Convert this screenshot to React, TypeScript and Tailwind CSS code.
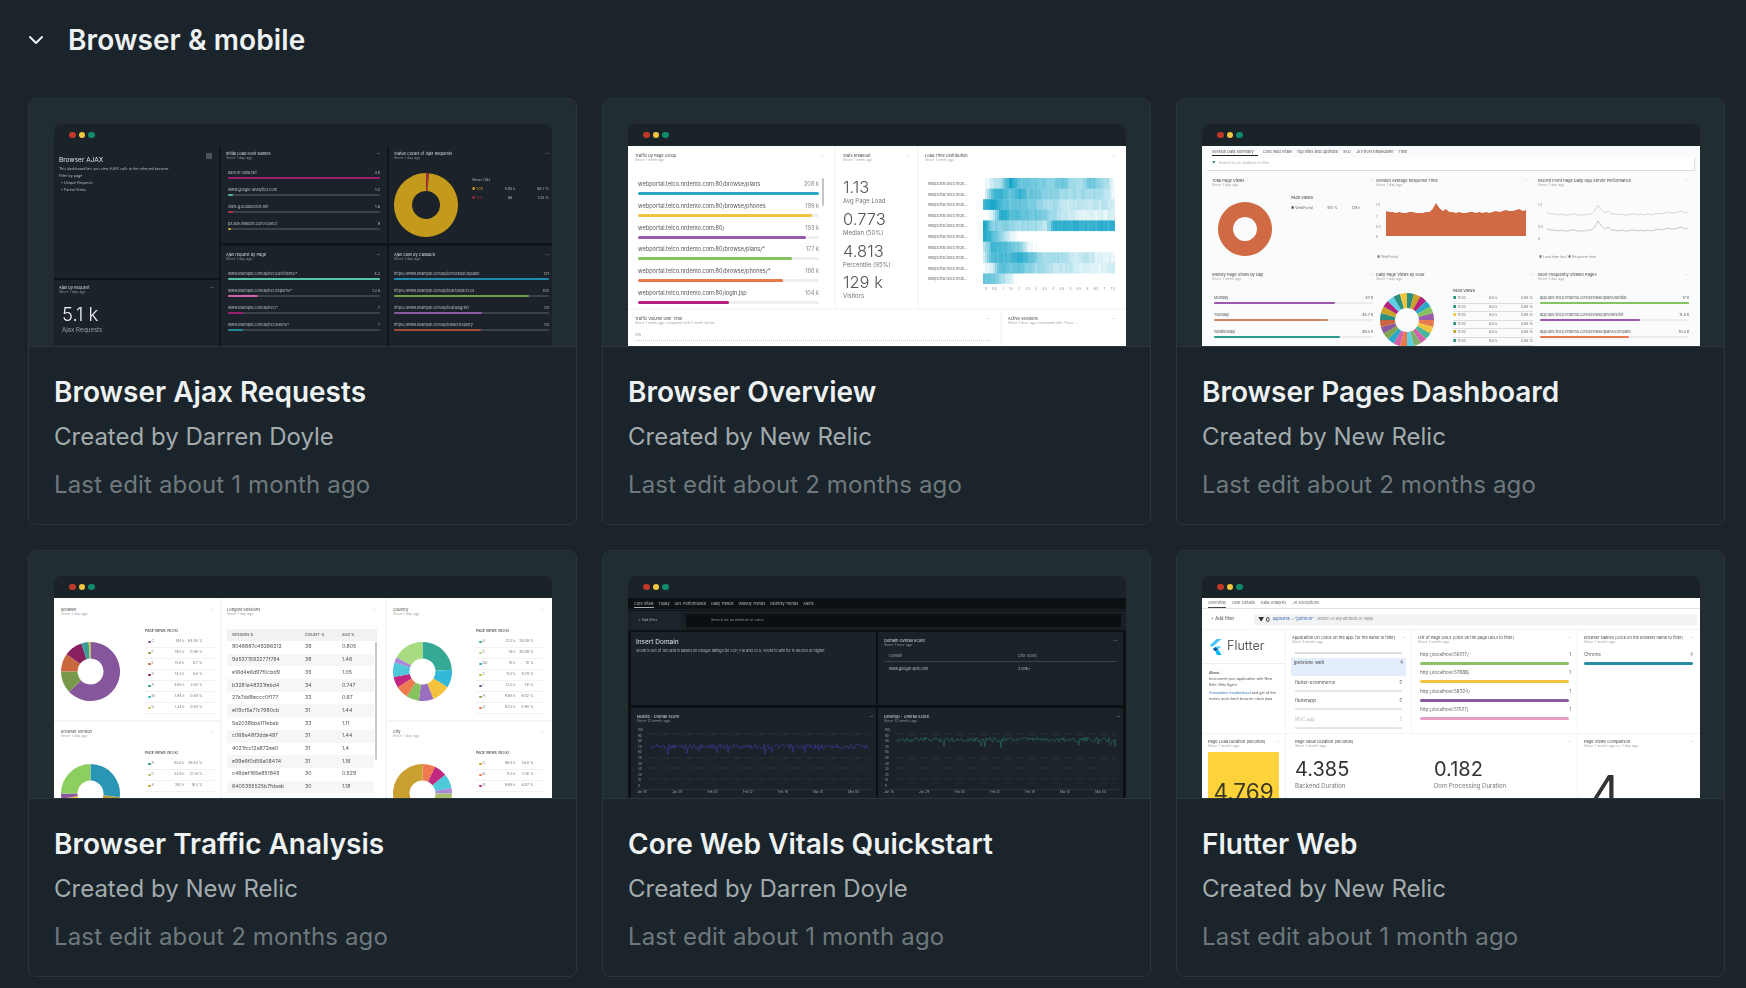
import React from 'react';
import { ChevronDown } from 'lucide-react';

type Seg = [number, string];

// donut drawn from arcs, clockwise from 12 o'clock
const Donut = ({ size, hole, segs }: { size: number; hole: number; segs: Seg[] }) => {
  const c = size / 2;
  const total = segs.reduce((s, x) => s + x[0], 0);
  let a = -Math.PI / 2;
  return (
    <svg width={size} height={size} viewBox={`0 0 ${size} ${size}`} className="shrink-0">
      {segs.map(([v, color], i) => {
        const next = a + (v / total) * Math.PI * 2 - 0.0001;
        const large = next - a > Math.PI ? 1 : 0;
        const d = `M${c + c * Math.cos(a)} ${c + c * Math.sin(a)}A${c} ${c} 0 ${large} 1 ${c + c * Math.cos(next)} ${c + c * Math.sin(next)}L${c + hole * Math.cos(next)} ${c + hole * Math.sin(next)}A${hole} ${hole} 0 ${large} 0 ${c + hole * Math.cos(a)} ${c + hole * Math.sin(a)}Z`;
        a = next;
        return <path key={i} d={d} fill={color} />;
      })}
    </svg>
  );
};

const noise = (i: number, seed: number) => {
  const v = Math.sin(i * 12.9898 + seed * 78.233) * 43758.5453;
  return v - Math.floor(v);
};

const Head = ({ title, sub, dark }: { title: string; sub: string; dark?: boolean }) => (
  <div className="flex justify-between">
    <div>
      <div className={`text-[4px] leading-[5px] whitespace-nowrap ${dark ? 'text-[#d8dcde]' : 'text-[#444]'}`}>{title}</div>
      <div className={`text-[3.6px] leading-[5px] whitespace-nowrap ${dark ? 'text-[#8b9296]' : 'text-[#a5a5a5]'}`}>{sub}</div>
    </div>
    <div className={`text-[4px] leading-[5px] ${dark ? 'text-[#d8dcde]' : 'text-[#999]'}`}>···</div>
  </div>
);

const BarRow = ({ label, value, frac, color, dark }: { label: string; value: string; frac: number; color: string; dark?: boolean }) => (
  <div className="h-[17px] pt-[3px]">
    <div className={`flex justify-between text-[3.8px] leading-[6px] whitespace-nowrap ${dark ? 'text-[#b7bcbf]' : 'text-[#555]'}`}>
      <span>{label}</span>
      <span>{value}</span>
    </div>
    <div className={`h-[2px] mt-[1px] rounded-full ${dark ? 'bg-[#3b4348]' : 'bg-[#ececec]'}`}>
      <div className="h-full rounded-full" style={{ width: `${frac * 100}%`, background: color }} />
    </div>
  </div>
);

const Legend = ({ title, rows }: { title: string; rows: [string, string, string, string][] }) => (
  <div className="w-[69px] shrink-0">
    <div className="text-[3.4px] leading-[5px] font-semibold text-[#555] mb-[3px]">{title}</div>
    {rows.map(([color, name, a, b], i) => (
      <div key={i} className="flex items-center h-[11px] text-[3.6px] text-[#777] border-b border-[#f2f2f2]">
        <div className="size-[2.5px] rounded-full ml-[3px] mr-[1px]" style={{ background: color }} />
        <span className="w-[16px]">{name}</span>
        <span className="w-[17px] text-right">{a}</span>
        <span className="w-[18px] text-right">{b}</span>
      </div>
    ))}
  </div>
);

const BrowserAjax = () => (
  <div className="flex gap-[2px] h-full bg-[#0e1418] blur-[0.35px]">
    <div className="w-[165px] flex flex-col gap-[2px]">
      <div className="h-[132px] bg-[#1b2229] px-[5px] pt-[10px] text-[#b7bcbf]">
        <div className="flex justify-between">
          <div className="text-[6.5px] leading-[9px] text-[#dfe3e5]">Browser AJAX</div>
          <div className="size-[6px] bg-[#4a5258] mr-[2px] -mt-[3px]" />
        </div>
        <div className="text-[3.6px] leading-[7px] whitespace-nowrap mt-[1px]">This dashboard lets you view AJAX calls to the selected browser</div>
        <div className="text-[3.6px] leading-[7px]">Filter by page</div>
        <div className="text-[3.6px] leading-[7px] pl-[2px]">• Unique Requests</div>
        <div className="text-[3.6px] leading-[7px] pl-[2px]">• Parent Views</div>
      </div>
      <div className="flex-1 bg-[#1b2229] px-[5px] pt-[5px] text-[#d8dcde]">
        <Head title="Ajax by Request" sub="Since 1 day ago" dark />
        <div className="text-[18.5px] leading-[22px] font-light mt-[8px] pl-[3px] text-[#eef1f2]">5.1 k</div>
        <div className="text-[6px] leading-[7px] pl-[3px] mt-[1px] text-[#9aa0a4]">Ajax Requests</div>
      </div>
    </div>
    <div className="w-[166px] flex flex-col gap-[3px]">
      <div className="h-[97px] bg-[#1b2229] pl-[5px] pr-[7px] pt-[5px]">
        <Head title="Initial Load Host Names" sub="Since 1 day ago" dark />
        <div className="pl-[2px] mt-[6px]">
          <BarRow dark label="bam.nr-data.net" value="4 k" frac={1} color="#9c1f6e" />
          <BarRow dark label="www.google-analytics.com" value="1.2" frac={0.03} color="#45b89a" />
          <BarRow dark label="stats.g.doubleclick.net" value="1.6" frac={0.03} color="#a8324a" />
          <BarRow dark label="px.ads.linkedin.com/collect" value="9" frac={0.02} color="#c9a227" />
        </div>
      </div>
      <div className="flex-1 bg-[#1b2229] pl-[5px] pr-[7px] pt-[6px]">
        <Head title="Ajax request by Page" sub="Since 1 day ago" dark />
        <div className="pl-[2px] mt-[6px]">
          <BarRow dark label="www.example.com/api/v2/cart/items/*" value="4.2" frac={1} color="#55c7a7" />
          <BarRow dark label="www.example.com/api/v2/reports/*" value="1.3 k" frac={0.2} color="#d163ab" />
          <BarRow dark label="www.example.com/api/v2/*" value="7" frac={0.1} color="#9c1f6e" />
          <BarRow dark label="www.example.com/api/v2/users/*" value="7" frac={0.1} color="#1e8a94" />
        </div>
      </div>
    </div>
    <div className="flex-1 flex flex-col gap-[3px]">
      <div className="h-[97px] bg-[#1b2229] pl-[5px] pr-[3px] pt-[5px]">
        <Head title="Status Codes of Ajax Requests" sub="Since 1 day ago" dark />
        <div className="flex gap-[14px] pt-[12px]">
          <Donut size={64} hole={14} segs={[[1.5, '#a52a3a'], [98.5, '#c49a1c']]} />
          <div className="flex-1 text-[3.6px] leading-[9px] text-[#b7bcbf] pt-[3px]">
            <div>Views (4k)</div>
            <div className="flex justify-between"><span className="text-[#c49a1c]">● 200</span><span>5.05 k</span><span>98.7 %</span></div>
            <div className="flex justify-between"><span className="text-[#a52a3a]">● 301</span><span>66</span><span>1.28 %</span></div>
          </div>
        </div>
      </div>
      <div className="flex-1 bg-[#1b2229] pl-[5px] pr-[3px] pt-[6px]">
        <Head title="Ajax calls by Callback" sub="Since 1 day ago" dark />
        <div className="mt-[6px]">
          <BarRow dark label="https://www.example.com/api/checkout/update" value="121" frac={1} color="#1e88ad" />
          <BarRow dark label="https://www.example.com/api/cart/add/1234" value="102" frac={0.87} color="#6f9e44" />
          <BarRow dark label="https://www.example.com/api/catalog/list" value="7.0" frac={0.57} color="#8a5aa0" />
          <BarRow dark label="https://www.example.com/api/search/query" value="7.0" frac={0.56} color="#a04f3a" />
        </div>
      </div>
    </div>
  </div>
);

const heatRows = [
  '0238555445335430',
  '0675755443333320',
  '7865554332222221',
  '0186655432211111',
  '8444333277777777',
  '8631000000000000',
  '2765410000000000',
  '2666764333222111',
  '0265543322211112',
  '5531000000000000',
];

// smooths the 16 coarse cells into thin columns
const Heatmap = () => (
  <svg width="132" height="106" viewBox="0 0 132 106">
    {heatRows.map((row, y) =>
      Array.from({ length: 66 }, (_, x) => {
        const p = (x / 66) * 15;
        const i = Math.floor(p);
        const v = Number(row[i]) + (Number(row[i + 1]) - Number(row[i])) * (p - i);
        const alpha = v === 0 ? 0 : Math.max(0, v / 8 + (noise(x, y) - 0.5) * 0.12);
        return <rect key={`${x}-${y}`} x={x * 2} y={y * 10.6} width="2.1" height="10.7" fill="#17a5c8" fillOpacity={alpha} />;
      })
    )}
  </svg>
);

const BrowserOverview = () => (
  <div className="h-full bg-[#f7f8f8] flex flex-col gap-[2px] blur-[0.35px]">
    <div className="h-[162px] flex gap-[2px]">
      <div className="w-[206px] bg-white pl-[7px] pr-[10px] pt-[7px]">
        <Head title="Traffic by Page Group" sub="Since 1 week ago" />
        <div className="flex mt-[17px] pl-[3px] gap-[3px]">
          <div className="w-[181px] flex flex-col gap-[4.8px]">
            {[
              ['webportal.telco.nrdemo.com:80/browse/plans', '208 k', 1, '#2ba8c6'],
              ['webportal.telco.nrdemo.com:80/browse/phones', '199 k', 0.96, '#f0c43f'],
              ['webportal.telco.nrdemo.com:80/', '193 k', 0.93, '#9b59ab'],
              ['webportal.telco.nrdemo.com:80/browse/plans/*', '177 k', 0.85, '#86c35f'],
              ['webportal.telco.nrdemo.com:80/browse/phones/*', '166 k', 0.8, '#e8794d'],
              ['webportal.telco.nrdemo.com:80/login.jsp', '104 k', 0.5, '#b5217f'],
            ].map(([label, value, frac, color]) => (
              <div key={label as string} className="h-[17px]">
                <div className="flex justify-between text-[5.6px] leading-[9px] text-[#555] whitespace-nowrap">
                  <span>{label}</span>
                  <span className="text-[#888]">{value}</span>
                </div>
                <div className="h-[3px] mt-[3px] rounded-full bg-[#eeeeee]">
                  <div className="h-full rounded-full" style={{ width: `${(frac as number) * 100}%`, background: color as string }} />
                </div>
              </div>
            ))}
          </div>
          <div className="w-[2px] h-[28px] bg-[#c4c4c4] rounded-full -mt-[2px]" />
        </div>
      </div>
      <div className="w-[81px] bg-white pl-[7px] pr-[8px] pt-[7px]">
        <Head title="Stats Breakout" sub="Since 1 week ago" />
        <div className="mt-[14px]">
          {[
            ['1.13', 'Avg Page Load'],
            ['0.773', 'Median (50%)'],
            ['4.813', 'Percentile (95%)'],
            ['129 k', 'Visitors'],
          ].map(([n, l]) => (
            <div key={l} className="h-[31.8px]">
              <div className="text-[16.5px] leading-[20px] text-[#555] font-light">{n}</div>
              <div className="text-[6px] leading-[8px] text-[#777] whitespace-nowrap">{l}</div>
            </div>
          ))}
        </div>
      </div>
      <div className="flex-1 bg-white pl-[6px] pr-[11px] pt-[7px]">
        <Head title="Load Time Distribution" sub="Since 1 week ago" />
        <div className="flex mt-[15px] justify-between">
          <div className="pl-[3px] pt-[1px]">
            {heatRows.map((_, i) => (
              <div key={i} className="h-[10.6px] text-[3.7px] leading-[10px] text-[#666]">webportal.telco.nrde...</div>
            ))}
          </div>
          <Heatmap />
        </div>
        <div className="flex justify-between pl-[60px] text-[3.2px] leading-[8px] text-[#888] whitespace-nowrap">
          {['0', '0.5', '1', '1.5', '2', '2.5', '3', '3.5', '4', '4.5', '5', '5.5', '6', '6.5', '7', '7.5'].map((t) => (
            <span key={t}>{t}</span>
          ))}
        </div>
      </div>
    </div>
    <div className="flex-1 flex gap-[2px]">
      <div className="w-[372px] bg-white pl-[7px] pr-[10px] pt-[6px]">
        <Head title="Traffic Volume over Time" sub="Since 1 week ago compared with 1 week earlier" />
        <div className="text-[3.6px] leading-[5px] text-[#888] mt-[7px]">125</div>
        <div className="border-t border-dotted border-[#ccc] mt-[2px]" />
      </div>
      <div className="flex-1 bg-white pl-[6px] pr-[10px] pt-[6px]">
        <Head title="Active Sessions" sub="Since 1 hour ago compared with 1 hour ..." />
      </div>
    </div>
  </div>
);

const areaTop = [8, 9, 9, 10, 9, 10, 10, 9, 9, 10, 10, 10, 9, 9, 6, 0, 5, 8, 6, 9, 9, 10, 9, 10, 10, 9, 9, 10, 9, 10, 9, 10, 9, 8, 9, 8, 7, 8, 8, 7, 6, 8, 7];

const AreaChart = () => (
  <svg width="150" height="44" viewBox="0 0 150 44" className="mt-[12px]">
    <path d={`M10 36${areaTop.map((y, i) => `L${10 + (i * 140) / 42} ${y + 3}`).join('')}L150 36Z`} fill="#cf6a45" />
    <text x="0" y="6" fontSize="3.4" fill="#888">1.5</text>
    <text x="0" y="18" fontSize="3.4" fill="#888">1</text>
    <text x="0" y="28" fontSize="3.4" fill="#888">0.5</text>
    <text x="0" y="38" fontSize="3.4" fill="#888">0</text>
  </svg>
);

const LineChart = () => (
  <svg width="150" height="44" viewBox="0 0 150 44" className="mt-[12px]">
    <path d={`M10 14${areaTop.map((y, i) => `L${10 + (i * 140) / 42} ${y + 5}`).join('')}`} fill="none" stroke="#999" strokeWidth="0.4" />
    <path d={`M10 30${areaTop.map((y, i) => `L${10 + (i * 140) / 42} ${y + 21}`).join('')}`} fill="none" stroke="#777" strokeWidth="0.4" />
    <text x="0" y="6" fontSize="3.4" fill="#888">1.5</text>
    <text x="0" y="28" fontSize="3.4" fill="#888">0.5</text>
    <text x="0" y="40" fontSize="3.4" fill="#888">0</text>
  </svg>
);

const BrowserPages = () => (
  <div className="h-full bg-[#fafbfc] blur-[0.35px] overflow-hidden">
    <div className="h-[12px] flex gap-[5px] pl-[10px] text-[3.8px] leading-[11px] text-[#555] whitespace-nowrap">
      <span className="border-b border-[#222] w-[46px] h-[10px]">Session Data Summary</span>
      <span>Core Web Vitals</span>
      <span>Top Sites and Optimize</span>
      <span>SEO</span>
      <span>JS Errors Breakdown</span>
      <span>Time</span>
    </div>
    <div className="h-[13px] mx-[5px] bg-white border-r border-b border-[#dcdcdc] pl-[5px] text-[3.6px] leading-[10px] text-[#aaa] flex gap-[3px]">
      <span className="text-[#2f8f83]">▼</span>
      <span>Search for an attribute to filter</span>
    </div>
    <div className="grid grid-cols-[164px_162px_1fr] pl-[10px] pt-[7px] pr-[11px] h-[97px]">
      <div className="pr-[3px]">
        <Head title="Total Page Views" sub="Since 1 day ago" />
        <div className="flex gap-[19px] pl-[6px]">
          <div className="pt-[14px]">
            <Donut size={54} hole={12} segs={[[1, '#cf6a45']]} />
          </div>
          <div className="pt-[5px] text-[3.6px] leading-[10px] text-[#666] whitespace-nowrap">
            <div className="font-semibold">PAGE VIEWS</div>
            <div className="flex gap-[14px]"><span>● WebPortal</span><span>100 %</span><span>129 k</span></div>
          </div>
        </div>
      </div>
      <div className="pr-[11px]">
        <Head title="Session Average Response Time" sub="Since 1 day ago" />
        <AreaChart />
        <div className="text-[3.4px] leading-[8px] text-[#888] pl-[1px] mt-[9px]">● WebPortal</div>
      </div>
      <div>
        <Head title="Recent Front Page Daily App Server Performance" sub="Since 1 day ago" />
        <LineChart />
        <div className="text-[3.4px] leading-[8px] text-[#888] pl-[1px] mt-[9px]">● Load time (ms) ● Response time</div>
      </div>
    </div>
    <div className="grid grid-cols-[164px_162px_1fr] pl-[10px] pr-[11px] mt-[4px]">
      <div className="pr-[3px]">
        <Head title="Weekly Page Views by Day" sub="Since 1 week ago" />
        <div className="mt-[10px] pl-[2px]">
          <BarRow label="Monday" value="47 k" frac={0.76} color="#9b59ab" />
          <BarRow label="Tuesday" value="44.7 k" frac={0.72} color="#c98a5f" />
          <BarRow label="Wednesday" value="49.5 k" frac={0.79} color="#2a9d8f" />
          <BarRow label="Thursday" value="42 k" frac={0.7} color="#cf6a45" />
        </div>
      </div>
      <div className="pr-[5px]">
        <Head title="Daily Page Views by Hour" sub="Since 1 day ago" />
        <div className="flex gap-[19px] pl-[4px]">
          <div className="pt-[11px]">
            <Donut size={54} hole={12} segs={[[4, '#2a8f7f'], [4, '#c9a227'], [4, '#b5217f'], [4, '#2ba8c6'], [4, '#86c35f'], [4, '#9b59ab'], [4, '#e8794d'], [4, '#f0c43f'], [4, '#45b89a'], [4, '#d163ab'], [4, '#7fb069'], [4, '#5ccfe6'], [4, '#e8794d'], [4, '#d163ab'], [4, '#2ba8c6'], [4, '#7fa650'], [4, '#8a5aa0'], [4, '#c9663f'], [4, '#2a8f7f'], [4, '#c9a227'], [4, '#b5217f'], [4, '#5ccfe6'], [4, '#2a8f7f'], [4, '#f0c43f']]} />
          </div>
          <div className="pt-[6px] text-[3.6px] text-[#666] flex-1">
            <div className="font-semibold leading-[7px]">PAGE VIEWS</div>
            {['#2a8f7f', '#2a8f7f', '#f0c43f', '#2a8f7f', '#c9a227', '#2a8f7f'].map((c, i) => (
              <div key={i} className="flex justify-between h-[8.5px] items-center border-b border-[#ddd]">
                <span style={{ color: c }}>■ <span className="text-[#777]">11:00</span></span>
                <span>6.5 k</span>
                <span>5.06 %</span>
              </div>
            ))}
          </div>
        </div>
      </div>
      <div>
        <Head title="Most Frequently Viewed Pages" sub="Since 1 day ago" />
        <div className="mt-[10px] pl-[2px]">
          <BarRow label="app.dev.telco.nrdemo.com/browse/plans/details" value="17 k" frac={1} color="#86c35f" />
          <BarRow label="app.dev.telco.nrdemo.com/browse/phones/list" value="11.4 k" frac={0.67} color="#9b59ab" />
          <BarRow label="app.dev.telco.nrdemo.com/browse/plans/compare" value="10.3 k" frac={0.6} color="#e8794d" />
          <BarRow label="app.dev.telco.nrdemo.com/checkout/shipping" value="9.8 k" frac={0.5} color="#2ba8c6" />
        </div>
      </div>
    </div>
  </div>
);

const sessions: [string, string, string][] = [
  ['9048887c49266212', '39', '0.805'],
  ['9d5371592277f784', '38', '1.46'],
  ['e16d4e6d97f0cbd9', '35', '1.05'],
  ['b3281a48321febd4', '34', '0.747'],
  ['27a7dd8eccc0f177', '33', '0.67'],
  ['e09cf5a71c7680cb', '31', '1.44'],
  ['5a2038bba111ebab', '33', '1.11'],
  ['c068a48f3dde497', '31', '1.44'],
  ['4021fcc12a872ee0', '31', '1.4'],
  ['e99e6f0d56a08474', '31', '1.16'],
  ['c46def165e851845', '30', '0.529'],
  ['6405355525b7fdaab', '30', '1.18'],
];

const legendA: [string, string, string, string][] = [
  ['#7a4f9a', 'C', '104 k', '64.93 %'],
  ['#7f9a3f', 'F', '19.5 k', '11.96 %'],
  ['#c9663f', 'E', '15.8 k', '9.7 %'],
  ['#8a1f5e', 'S', '14.3 k', '8.8 %'],
  ['#2a8f7f', 'A', '4.65 k', '2.85 %'],
  ['#35b5b0', 'M', '1.94 k', '0.84 %'],
  ['#c9c03f', 'U', '1.34 k', '0.84 %'],
];

const legendB: [string, string, string, string][] = [
  ['#35a896', 'U', '21.3 k', '26.09 %'],
  ['#a8dc80', 'C', '19 k', '20.99 %'],
  ['#2ba8c6', 'BU', '16 k', '10 %'],
  ['#c9c03f', 'C', '15.7 k', '9.79 %'],
  ['#7a4f9a', 'L', '13.3 k', '7.6 %'],
  ['#7fa650', 'A', '9.68 k', '6.02 %'],
  ['#e8794d', 'G', '9.53 k', '5.94 %'],
];

const BrowserTraffic = () => (
  <div className="h-full bg-[#f5f6f6] grid grid-cols-[166px_163px_1fr] gap-[2px] blur-[0.35px]">
    <div className="flex flex-col gap-[2px]">
      <div className="h-[122px] bg-white pl-[7px] pr-[6px] pt-[9px]">
        <Head title="Browser" sub="Since 1 day ago" />
        <div className="flex justify-between pt-[12px]">
          <div className="pt-[13px]">
            <Donut size={59} hole={13} segs={[[63, '#85569b'], [12, '#79994a'], [10, '#c9683f'], [10, '#8a1f5e'], [4, '#3d9c96'], [1, '#c9c03f']]} />
          </div>
          <Legend title="PAGE VIEWS (163 K)" rows={legendA} />
        </div>
      </div>
      <div className="flex-1 bg-white pl-[7px] pr-[6px] pt-[7px] overflow-hidden">
        <Head title="Browser Version" sub="Since 1 day ago" />
        <div className="flex justify-between pt-[12px]">
          <div className="pt-[13px]">
            <Donut size={59} hole={13} segs={[[27, '#2996b5'], [21, '#b59a3a'], [16, '#c9a227'], [5, '#2ba8c6'], [3, '#f0c43f'], [3, '#8a5aa0'], [25, '#8ccf60']]} />
          </div>
          <Legend title="PAGE VIEWS (163 K)" rows={[['#2a8f7f', 'A', '42.6 k', '26.44 %'], ['#b5c06a', 'C', '33.9 k', '21.14 %'], ['#c9a227', 'S', '26.1 k', '16.3 %']]} />
        </div>
      </div>
    </div>
    <div className="bg-white pl-[5px] pr-[8px] pt-[9px] overflow-hidden">
      <Head title="Longest Sessions" sub="Since 1 day ago" />
      <div className="h-[12px] mt-[12px] bg-[#f2f2f2] flex items-center pl-[5px] text-[4px] font-medium text-[#666]">
        <span className="w-[73px]">SESSION ⇅</span>
        <span className="w-[37px]">COUNT ⇅</span>
        <span>AVG ⇅</span>
      </div>
      <div className="flex">
        <div className="w-[149px]">
          {sessions.map(([s, c, a], i) => (
            <div key={s} className={`h-[12.7px] flex items-center pl-[5px] text-[5.2px] text-[#555] ${i % 2 ? 'bg-[#f6f6f6]' : 'bg-white'}`}>
              <span className="w-[73px] whitespace-nowrap">{s}</span>
              <span className="w-[37px]">{c}</span>
              <span>{a}</span>
            </div>
          ))}
        </div>
        <div className="w-[2px] h-[118px] ml-[1px] mt-[1px] bg-[#c8c8c8] rounded-full" />
      </div>
    </div>
    <div className="flex flex-col gap-[2px]">
      <div className="h-[122px] bg-white pl-[6px] pr-[7px] pt-[9px]">
        <Head title="Country" sub="Since 1 day ago" />
        <div className="flex justify-between pt-[12px]">
          <div className="pt-[13px]">
            <Donut size={59} hole={13} segs={[[24, '#35a896'], [10, '#34b8d8'], [10, '#f5c33b'], [8, '#9b6fc0'], [7, '#86c35f'], [7, '#f07a4f'], [6, '#c2287f'], [8, '#4fc9d9'], [3, '#a988d8'], [17, '#a8dc80']]} />
          </div>
          <Legend title="PAGE VIEWS (163 K)" rows={legendB} />
        </div>
      </div>
      <div className="flex-1 bg-white pl-[6px] pr-[7px] pt-[7px] overflow-hidden">
        <Head title="City" sub="Since 1 day ago" />
        <div className="flex justify-between pt-[12px]">
          <div className="pt-[13px]">
            <Donut size={59} hole={13} segs={[[7, '#f07a4f'], [7, '#c2287f'], [8, '#4fc9d9'], [3, '#a988d8'], [5, '#a8c070'], [70, '#c9a02f']]} />
          </div>
          <Legend title="PAGE VIEWS (163 K)" rows={[['#c9a02f', 'C', '96.5 k', '58.8 %'], ['#f07a4f', 'N', '11.3 k', '7.48 %'], ['#c2287f', 'N', '9.68 k', '6.07 %']]} />
        </div>
      </div>
    </div>
  </div>
);

const ScoreChart = ({ color, base, seed }: { color: string; base: number; seed: number }) => {
  const pts = Array.from({ length: 220 }, (_, i) => {
    const dip = noise(i, seed) > 0.96 ? 6 : 0;
    return `${13 + (i * 219) / 219},${(base + noise(i + 3, seed) * 5 + dip).toFixed(1)}`;
  }).join(' ');
  return (
    <svg width="236" height="64" viewBox="0 0 236 64" className="mt-[2px]">
      {[8, 32, 42, 53].map((y) => (
        <line key={y} x1="12" x2="232" y1={y} y2={y} stroke="#4a5258" strokeWidth="0.4" strokeDasharray="8 4" />
      ))}
      <polyline points={pts} fill="none" stroke={color} strokeWidth="0.55" />
      {['100', '90', '80', '70', '60', '50', '40', '30', '20', '10', '0'].map((t, i) => (
        <text key={t} x="1" y={5 + i * 5.6} fontSize="3" fill="#9aa0a4">{t}</text>
      ))}
      <line x1="0" x2="236" y1="63.5" y2="63.5" stroke="#3b4348" strokeWidth="0.5" />
    </svg>
  );
};

const Ticks = () => (
  <div className="flex justify-between text-[3.2px] leading-[5px] text-[#9aa0a4] whitespace-nowrap pr-[14px]">
    {['Jan 15', 'Jan 29', 'Feb 05', 'Feb 12', 'Feb 19', 'Mar 01', 'Mar 08'].map((t) => <span key={t}>{t}</span>)}
  </div>
);

const CoreWebVitals = () => (
  <div className="h-full bg-[#0c1114] blur-[0.35px] overflow-hidden">
    <div className="h-[12px] flex gap-[5px] pl-[6px] text-[3.8px] leading-[11px] text-[#b7bcbf] whitespace-nowrap border-b border-[#20272c]">
      <span className="border-b border-[#aab] h-[10px]">Core Vitals</span>
      <span>Today</span>
      <span>URL Performance</span>
      <span>Daily Trends</span>
      <span>Weekly Trends</span>
      <span>Monthly Trends</span>
      <span>Alerts</span>
    </div>
    <div className="h-[19px] flex gap-[2px] mt-[1px] pl-[3px] pr-[2px] bg-[#182026]">
      <div className="w-[50px] flex items-center pl-[7px] text-[3.6px] text-[#a5abaf] bg-[#1c242a] whitespace-nowrap">+ Add filter</div>
      <div className="flex-1 flex items-center pl-[25px] m-[3px] text-[3.6px] text-[#8b9296] bg-[#0b0f12] rounded-[1px] whitespace-nowrap">Search for an attribute or value</div>
    </div>
    <div className="grid grid-cols-2 gap-x-[2px] gap-y-[3px] px-[3px] pt-[2px]">
      <div className="h-[73px] bg-[#1b2229] px-[5px] pt-[6px]">
        <div className="text-[6.5px] leading-[9px] text-[#dfe3e5]">Insert Domain</div>
        <div className="text-[3.7px] leading-[8px] text-[#b7bcbf] whitespace-nowrap">Score is out of 100 and is based on Google ratings for LCP, FID and CLS. Score to aim for is 90/100 or higher.</div>
      </div>
      <div className="h-[73px] bg-[#1b2229] px-[6px] pt-[6px]">
        <Head title="Domain Overall Score" sub="Since 1 hour ago" dark />
        <div className="flex text-[3.7px] leading-[10px] text-[#9aa0a4] border-b border-[#3b4348] pl-[5px] mt-[3px]">
          <span className="w-[129px]">Domain</span><span>Grid Score</span>
        </div>
        <div className="flex text-[3.7px] leading-[13px] text-[#b7bcbf] pl-[5px]">
          <span className="w-[129px]">www.google-apis.com</span><span>2.00B+</span>
        </div>
      </div>
      <div className="h-[90px] bg-[#1b2229] pl-[6px] pr-[3px] pt-[6px]">
        <Head title="Mobile - Overall Score" sub="Since 12 weeks ago" dark />
        <ScoreChart color="#3e3fa8" base={18} seed={1} />
        <Ticks />
      </div>
      <div className="h-[90px] bg-[#1b2229] pl-[6px] pr-[3px] pt-[6px]">
        <Head title="Desktop - Overall Score" sub="Since 12 weeks ago" dark />
        <ScoreChart color="#2b7a63" base={11} seed={2} />
        <Ticks />
      </div>
    </div>
  </div>
);

const FlutterLogo = () => (
  <svg width="13" height="16" viewBox="0 0 13 16" className="shrink-0">
    <path d="M7.8 0H12.6L3.2 8 .8 6.2Z" fill="#47c5fb" />
    <path d="M7.8 7.4H12.6L6.4 12.2 3.8 10.1Z" fill="#47c5fb" />
    <path d="M3.8 10.1 6.4 7.9 9 10.2 6.4 12.2Z" fill="#00569e" />
    <path d="M6.4 12.2 9 10.2 12.6 16H7.8Z" fill="#00b5f8" />
  </svg>
);

const FlutterWeb = () => (
  <div className="h-full bg-[#f2f4f5] blur-[0.35px] overflow-hidden">
    <div className="h-[11px] bg-white flex gap-[6px] pl-[6px] text-[4px] leading-[10px] text-[#666] whitespace-nowrap border-b border-[#e2e2e2]">
      <span className="border-b border-[#444] h-[10px]">Overview</span>
      <span>User Details</span>
      <span>Data Analysis</span>
      <span>JS Exceptions</span>
    </div>
    <div className="h-[20px] bg-white flex items-center pl-[9px] pr-[3px]">
      <div className="w-[43px] text-[4.4px] text-[#444] whitespace-nowrap">+ Add filter</div>
      <div className="flex-1 h-[11px] bg-[#f1f3f4] flex items-center pl-[4px] gap-[3px] text-[3.8px] text-[#888] whitespace-nowrap">
        <span className="text-[6px] font-bold text-[#333]">▼ 0</span>
        <span className="text-[#3a6ea5]">appName = &quot;jpetstore&quot;</span>
        <span>Search or any attribute or value</span>
      </div>
    </div>
    <div className="h-[103px] mt-[1px] grid grid-cols-[83px_125px_165px_1fr] gap-x-[1px]">
      <div className="bg-white overflow-hidden">
        <div className="h-[34px] flex items-center gap-[5px] pl-[7px] border-b border-[#eee]">
          <FlutterLogo />
          <span className="text-[12.5px] text-[#5f6368]">Flutter</span>
        </div>
        <div className="px-[7px] pt-[5px] text-[3.6px] leading-[5.5px] text-[#555]">
          <div className="font-semibold leading-[8px]">About</div>
          <div>Instrument your application with New Relic Web Agent</div>
          <div className="mt-[3px]"><span className="text-[#2b6fb5]">Automation troubleshoot</span> and get all the events and check browser stack data</div>
        </div>
      </div>
      <div className="bg-white px-[6px] pt-[5px] overflow-hidden">
        <Head title="Application Url (Click on the app. for the name to filter)" sub="Since 1 month ago" />
        <div className="h-[1.5px] bg-[#ddd] mx-[3px] mt-[7px]" />
        <div className="bg-[#e3edfb] h-[18px] mt-[4px] -mx-[1px] px-[3px] flex justify-between text-[4.6px] leading-[10px] text-[#444]"><span>jpetstore-web</span><span>4</span></div>
        {['flutter-ecommerce', 'flutterapp', 'MVC app'].map((l, i) => (
          <div key={l} className="h-[18.5px] pt-[4px] px-[3px]">
            <div className={`flex justify-between text-[4.6px] leading-[6px] ${i === 2 ? 'text-[#bbb]' : 'text-[#555]'}`}><span>{l}</span><span>2</span></div>
            <div className="h-[2px] bg-[#e6e6e6] mt-[4px]" />
          </div>
        ))}
      </div>
      <div className="bg-white px-[6px] pt-[5px] overflow-hidden">
        <Head title="List of Page URLs (Click on the page URLs to filter)" sub="Since 1 month ago" />
        {[
          ['http://localhost:56517/', '#8cc06a'],
          ['http://localhost:57888/', '#f0c43f'],
          ['http://localhost:58324/', '#8a5aa0'],
          ['http://localhost:51527/', '#e6a0c8'],
        ].map(([l, c], i) => (
          <div key={l} className={`h-[18.4px] ${i === 0 ? 'mt-[5px]' : ''}`}>
            <div className="flex justify-between text-[4.6px] leading-[9px] text-[#666] pl-[2px]"><span>{l}</span><span>1</span></div>
            <div className="h-[3px] mt-[3px] rounded-full mx-[2px]" style={{ background: c }} />
          </div>
        ))}
      </div>
      <div className="bg-white pl-[6px] pr-[7px] pt-[5px] overflow-hidden">
        <Head title="Browser Names (Click on the browser name to filter)" sub="Since 1 month ago" />
        <div className="flex justify-between text-[4.6px] leading-[9px] text-[#666] mt-[5px]"><span>Chrome</span><span>4</span></div>
        <div className="h-[3px] mt-[3px] rounded-full bg-[#2a8ca0]" />
      </div>
    </div>
    <div className="h-[70px] mt-[1px] grid grid-cols-[83px_291px_1fr] gap-x-[1px]">
      <div className="bg-white px-[6px] pt-[5px] overflow-hidden">
        <Head title="Page Load Duration (seconds)" sub="Since 1 month ago" />
        <div className="h-[60px] mt-[3px] rounded-[1px] bg-[#fdd33c] text-[22.5px] leading-[26px] pt-[27px] text-center text-[#3b3a20]">4.769</div>
      </div>
      <div className="bg-white pl-[9px] pr-[6px] pt-[5px]">
        <Head title="Page Value Duration (seconds)" sub="Since 1 month ago" />
        <div className="flex pt-[9px]">
          <div className="w-[139px]">
            <div className="text-[20px] leading-[22px] text-[#333]">4.385</div>
            <div className="text-[6px] leading-[9px] text-[#777] mt-[1px]">Backend Duration</div>
          </div>
          <div>
            <div className="text-[20px] leading-[22px] text-[#333]">0.182</div>
            <div className="text-[6px] leading-[9px] text-[#777] mt-[1px]">Dom Processing Duration</div>
          </div>
        </div>
      </div>
      <div className="bg-white pl-[6px] pr-[7px] pt-[5px] overflow-hidden">
        <Head title="Page Views Comparison" sub="Since 1 month ago vs. 1 day ago" />
        <div className="text-[48px] leading-[50px] pl-[6px] text-[#333] mt-[19px]">4</div>
      </div>
    </div>
  </div>
);

const Card = ({ title, by, edit, children }: { title: string; by: string; edit: string; children: React.ReactNode }) => (
  <div className="h-[427px] flex flex-col rounded-lg border border-[#2a363a] bg-[#1a242a] overflow-hidden">
    <div className="h-[248px] bg-[#222d32] border-b border-[#2a363a] pl-[25px] pr-[24px] pt-[25px] shrink-0">
      <div className="h-[222px] overflow-hidden rounded-t-lg flex flex-col">
        <div className="h-[22px] shrink-0 bg-[#1a2328] flex items-center gap-[3px] pl-[15px]">
          <div className="size-[6.5px] rounded-full bg-[#c0392b]" />
          <div className="size-[6.5px] rounded-full bg-[#f0c53f]" />
          <div className="size-[6.5px] rounded-full bg-[#0f8a6d]" />
        </div>
        <div className="h-[200px] overflow-hidden">{children}</div>
      </div>
    </div>
    <div className="px-[25px] pt-[27px]">
      <h3 className="text-[28px] leading-[36px] font-semibold text-[#eef2f3] whitespace-nowrap">{title}</h3>
      <p className="text-[24px] leading-[32px] mt-[11px] text-[#a3abae] whitespace-nowrap">{by}</p>
      <p className="text-[24px] leading-[32px] mt-[16px] tracking-[0.15px] text-[#6f797d] whitespace-nowrap">{edit}</p>
    </div>
  </div>
);

export default function App() {
  return (
    <div className="min-h-screen bg-[#1a242a] font-['Inter',sans-serif] pl-[28px] pr-[21px] pb-[10px]">
      <div className="h-[79px] flex items-center">
        <ChevronDown className="size-[24px] -ml-[4px] text-[#eef2f3]" strokeWidth={2} />
        <h2 className="ml-[20px] text-[28px] tracking-[0.1px] font-semibold text-[#eef2f3]">Browser &amp; mobile</h2>
      </div>
      <div className="grid grid-cols-3 gap-x-[25px] gap-y-[25px] mt-[19px]">
        <Card title="Browser Ajax Requests" by="Created by Darren Doyle" edit="Last edit about 1 month ago"><BrowserAjax /></Card>
        <Card title="Browser Overview" by="Created by New Relic" edit="Last edit about 2 months ago"><BrowserOverview /></Card>
        <Card title="Browser Pages Dashboard" by="Created by New Relic" edit="Last edit about 2 months ago"><BrowserPages /></Card>
        <Card title="Browser Traffic Analysis" by="Created by New Relic" edit="Last edit about 2 months ago"><BrowserTraffic /></Card>
        <Card title="Core Web Vitals Quickstart" by="Created by Darren Doyle" edit="Last edit about 1 month ago"><CoreWebVitals /></Card>
        <Card title="Flutter Web" by="Created by New Relic" edit="Last edit about 1 month ago"><FlutterWeb /></Card>
      </div>
    </div>
  );
}
